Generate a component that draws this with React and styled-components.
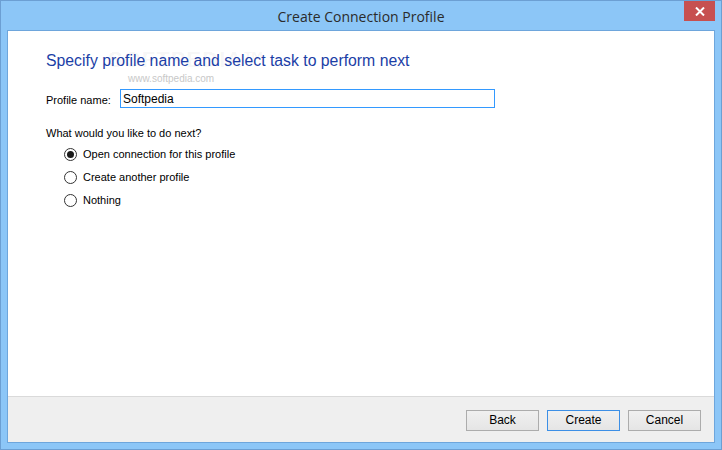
import React, { useState } from "react";
import styled, { createGlobalStyle } from "styled-components";

const Global = createGlobalStyle`
  html, body { margin: 0; padding: 0; background: #ffffff; }
  #root { width: 722px; height: 450px; }
  * { box-sizing: border-box; }
`;

const Window = styled.div`
  width: 722px;
  height: 450px;
  border: 1px solid #6c9fd3;
  background: #8cc6f7;
  padding: 0 6px 6px 6px;
  display: flex;
  flex-direction: column;
  position: relative;
`;

const TitleBar = styled.div`
  height: 29px;
  display: flex;
  align-items: center;
  justify-content: center;
  position: relative;
`;

const Title = styled.div`
  font-family: "Open Sans", "Noto Sans", sans-serif;
  font-size: 14px;
  color: #2b2b2b;
  padding-top: 1px;
`;

const CloseButton = styled.div`
  position: absolute;
  top: 0;
  right: 0;
  width: 31px;
  height: 20px;
  background: #c75050;
  display: flex;
  align-items: center;
  justify-content: center;
`;

const Client = styled.div`
  flex: 1;
  border: 1px solid #6ea6dc;
  background: #ffffff;
  display: flex;
  flex-direction: column;
`;

const Content = styled.div`
  flex: 1;
  padding: 20px 0 0 38px;
  position: relative;
  font-family: "Liberation Sans", Arial, sans-serif;
  font-size: 11px;
  color: #000;
`;

const Heading = styled.h1`
  margin: 0;
  font-family: "Liberation Sans", Arial, sans-serif;
  font-weight: normal;
  font-size: 15.8px;
  color: #1b3ea6;
  line-height: 20px;
  position: relative;
`;

const Watermark = styled.div`
  position: absolute;
  left: ${(p) => p.$x}px;
  top: ${(p) => p.$y}px;
  font-family: "Liberation Sans", Arial, sans-serif;
  font-size: ${(p) => p.$size}px;
  font-weight: ${(p) => (p.$bold ? "bold" : "normal")};
  color: ${(p) => p.$color};
  letter-spacing: ${(p) => p.$ls || 0}px;
  pointer-events: none;
  white-space: nowrap;
`;

const FieldRow = styled.div`
  display: flex;
  align-items: center;
  margin-top: 18px;
`;

const Label = styled.label`
  width: 74px;
  padding-top: 3px;
`;

const TextInput = styled.input`
  width: 375px;
  height: 19px;
  border: 1px solid #3399ff;
  padding: 0 0 0 2px;
  font-family: "Liberation Sans", Arial, sans-serif;
  font-size: 12px;
  color: #000;
  outline: none;
`;

const Question = styled.div`
  margin-top: 19px;
`;

const RadioList = styled.div`
  display: flex;
  flex-direction: column;
  gap: 9px;
  margin-top: 8px;
  padding-left: 18px;
`;

const RadioRow = styled.label`
  display: flex;
  align-items: center;
  height: 14px;
  gap: 6px;
`;

const RadioCircle = styled.span`
  width: 13px;
  height: 13px;
  border-radius: 50%;
  border: 1px solid #333;
  background: #fff;
  display: flex;
  align-items: center;
  justify-content: center;
  &::after {
    content: "";
    width: 7px;
    height: 7px;
    border-radius: 50%;
    background: ${(p) => (p.$checked ? "#1a1a1a" : "transparent")};
  }
`;

const Footer = styled.div`
  height: 46px;
  border-top: 1px solid #dadada;
  background: #efefef;
  display: flex;
  align-items: center;
  justify-content: flex-end;
  gap: 8px;
  padding: 1px 13px 0 0;
`;

const Button = styled.button`
  width: 73px;
  height: 21px;
  border: 1px solid ${(p) => (p.$default ? "#3c8fe6" : "#acacac")};
  background: linear-gradient(#f0f0f0, #e5e5e5);
  font-family: "Liberation Sans", Arial, sans-serif;
  font-size: 12px;
  color: #000;
  padding: 0;
`;

const options = [
  "Open connection for this profile",
  "Create another profile",
  "Nothing",
];

export default function App() {
  const [sel, setSel] = useState(0);
  return (
    <>
      <Global />
      <Window>
        <TitleBar>
          <Title>Create Connection Profile</Title>
          <CloseButton>
            <svg width="10" height="9" viewBox="0 0 10 9">
              <path d="M1 0.5 L9 8.5 M9 0.5 L1 8.5" stroke="#fff" strokeWidth="2" />
            </svg>
          </CloseButton>
        </TitleBar>
        <Client>
          <Content>
            <Watermark $x={100} $y={16} $size={22} $bold $color="rgba(0,0,0,0.05)" $ls={1}>
              SOFTPEDIA™
            </Watermark>
            <Watermark $x={120} $y={42} $size={10} $color="#c8c8c8">
              www.softpedia.com
            </Watermark>
            <Heading>Specify profile name and select task to perform next</Heading>
            <FieldRow>
              <Label>Profile name:</Label>
              <TextInput defaultValue="Softpedia" />
            </FieldRow>
            <Question>What would you like to do next?</Question>
            <RadioList>
              {options.map((o, i) => (
                <RadioRow key={o} onClick={() => setSel(i)}>
                  <RadioCircle $checked={sel === i} />
                  {o}
                </RadioRow>
              ))}
            </RadioList>
          </Content>
          <Footer>
            <Button>Back</Button>
            <Button $default>Create</Button>
            <Button>Cancel</Button>
          </Footer>
        </Client>
      </Window>
    </>
  );
}
